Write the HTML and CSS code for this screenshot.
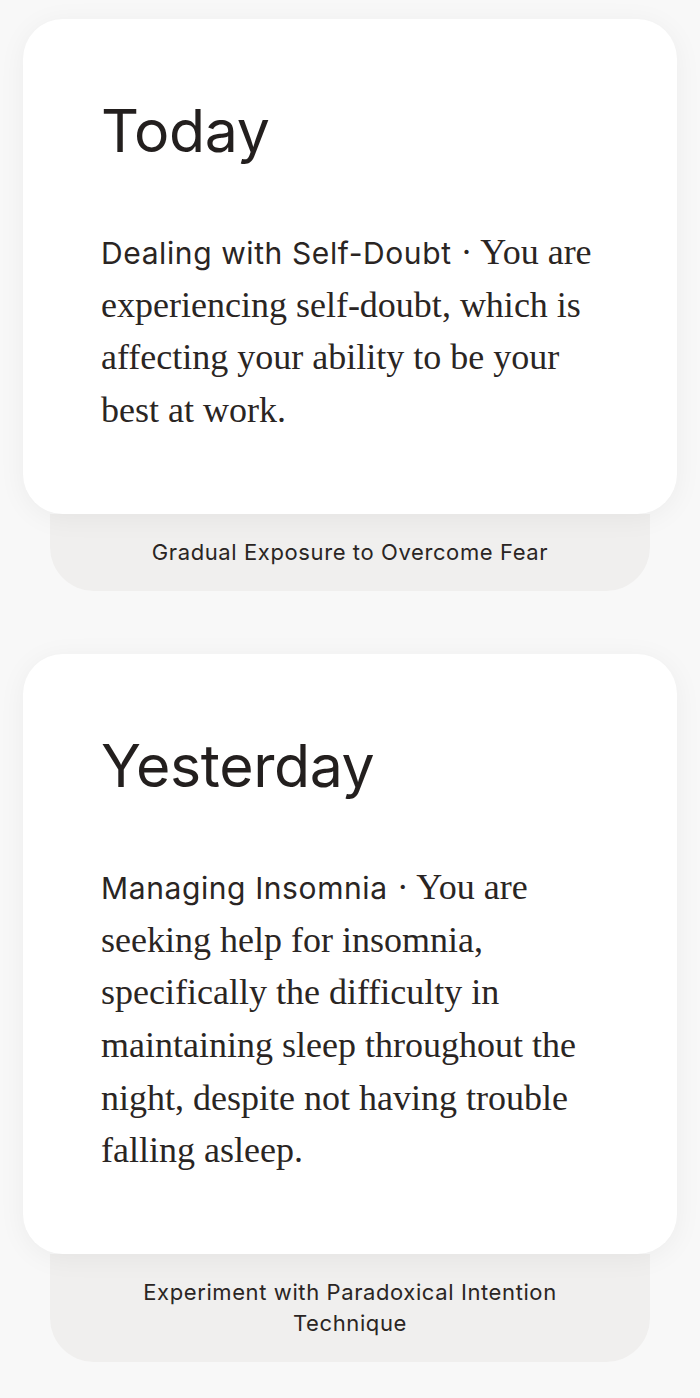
FILE: index.html
```html
<!DOCTYPE html>
<html lang="en">
<head>
<meta charset="utf-8">
<link rel="stylesheet" href="styles.css">
</head>
<body>
<main class="feed">
  <section class="entry">
    <article class="card">
      <h1 class="title">Today</h1>
      <p class="summary"><span class="topic">Dealing with Self-Doubt</span> · You are experiencing self-doubt, which is affecting your ability to be your best at work.</p>
    </article>
    <div class="tab">Gradual Exposure to Overcome Fear</div>
  </section>
  <section class="entry">
    <article class="card">
      <h1 class="title">Yesterday</h1>
      <p class="summary"><span class="topic">Managing Insomnia</span> · You are seeking help for insomnia, specifically the difficulty in maintaining sleep throughout the night, despite not having trouble falling asleep.</p>
    </article>
    <div class="tab">Experiment with Paradoxical Intention Technique</div>
  </section>
</main>
</body>
</html>
```

FILE: styles.css
```css
html, body {
  margin: 0;
  padding: 0;
  background: #f8f8f8;
}

.feed {
  display: flex;
  flex-direction: column;
  gap: 63px;
  padding: 19px 23px 36px;
}

.entry {
  display: flex;
  flex-direction: column;
}

.card {
  position: relative;
  z-index: 1;
  background: #ffffff;
  border-radius: 40px;
  padding: 80px 78px 77px;
  box-shadow: 0 4px 28px rgba(0, 0, 0, 0.05);
}

.title {
  margin: 0 0 63px;
  font-family: Inter, "Liberation Sans", sans-serif;
  font-weight: 400;
  font-size: 59px;
  line-height: 64px;
  letter-spacing: -0.4px;
  color: #231f1e;
}

.summary {
  margin: 0;
  font-family: "Liberation Serif", serif;
  font-size: 36px;
  line-height: 52.7px;
  color: #2a2523;
}

.topic {
  font-family: Inter, "Liberation Sans", sans-serif;
  font-size: 30px;
  line-height: 1;
  letter-spacing: 0.6px;
}

.tab {
  margin: 0 27px;
  background: #f0efee;
  border-radius: 0 0 44px 44px;
  padding: 23px 40px;
  text-align: center;
  font-family: Inter, "Liberation Sans", sans-serif;
  font-size: 22px;
  line-height: 31px;
  letter-spacing: 0.6px;
  color: #2a2523;
}
```
